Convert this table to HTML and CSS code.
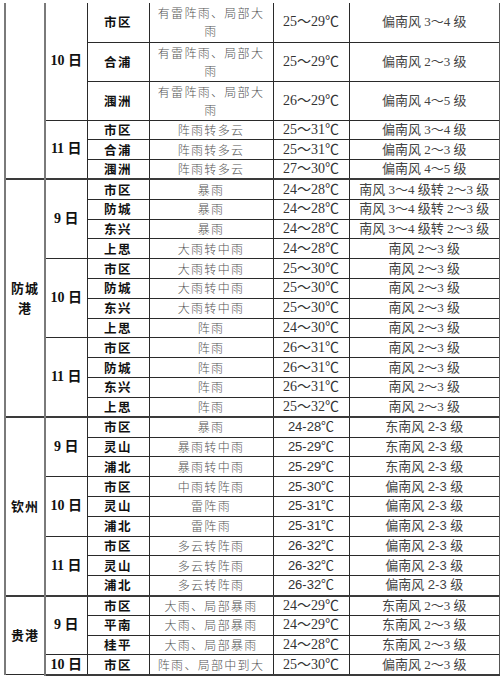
FILE: index.html
```html
<!DOCTYPE html>
<html lang="zh-CN">
<head>
<meta charset="utf-8">
<title>天气预报</title>
<link rel="stylesheet" href="styles.css">
</head>
<body>
<table class="wx">
<colgroup>
<col class="c-area"><col class="c-day"><col class="c-city"><col class="c-wx"><col class="c-temp"><col class="c-wind">
</colgroup>
<tbody>
<tr class="dbl first">
<td class="area" rowspan="6"></td>
<td class="day" rowspan="3">10 日</td>
<td class="city">市区</td><td class="wx2">有雷阵雨、局部大雨</td><td class="temp">25～29℃</td><td class="wind">偏南风 3～4 级</td>
</tr>
<tr class="dbl"><td class="city">合浦</td><td class="wx2">有雷阵雨、局部大雨</td><td class="temp">25～29℃</td><td class="wind">偏南风 2～3 级</td></tr>
<tr class="dbl"><td class="city">涠洲</td><td class="wx2">有雷阵雨、局部大雨</td><td class="temp">26～29℃</td><td class="wind">偏南风 4～5 级</td></tr>
<tr><td class="day" rowspan="3">11 日</td><td class="city">市区</td><td class="wx2">阵雨转多云</td><td class="temp">25～31℃</td><td class="wind">偏南风 3～4 级</td></tr>
<tr><td class="city">合浦</td><td class="wx2">阵雨转多云</td><td class="temp">25～31℃</td><td class="wind">偏南风 2～3 级</td></tr>
<tr><td class="city">涠洲</td><td class="wx2">阵雨转多云</td><td class="temp">27～30℃</td><td class="wind">偏南风 4～5 级</td></tr>

<tr class="sep"><td class="area" rowspan="12">防城<br>港</td><td class="day" rowspan="4">9 日</td><td class="city">市区</td><td class="wx2">暴雨</td><td class="temp">24～28℃</td><td class="wind">南风 3～4 级转 2～3 级</td></tr>
<tr><td class="city">防城</td><td class="wx2">暴雨</td><td class="temp">24～28℃</td><td class="wind">南风 3～4 级转 2～3 级</td></tr>
<tr><td class="city">东兴</td><td class="wx2">暴雨</td><td class="temp">24～28℃</td><td class="wind">南风 3～4 级转 2～3 级</td></tr>
<tr><td class="city">上思</td><td class="wx2">大雨转中雨</td><td class="temp">24～28℃</td><td class="wind">南风 2～3 级</td></tr>
<tr><td class="day" rowspan="4">10 日</td><td class="city">市区</td><td class="wx2">大雨转中雨</td><td class="temp">25～30℃</td><td class="wind">南风 2～3 级</td></tr>
<tr><td class="city">防城</td><td class="wx2">大雨转中雨</td><td class="temp">25～30℃</td><td class="wind">南风 2～3 级</td></tr>
<tr><td class="city">东兴</td><td class="wx2">大雨转中雨</td><td class="temp">25～30℃</td><td class="wind">南风 2～3 级</td></tr>
<tr><td class="city">上思</td><td class="wx2">阵雨</td><td class="temp">24～30℃</td><td class="wind">南风 2～3 级</td></tr>
<tr><td class="day" rowspan="4">11 日</td><td class="city">市区</td><td class="wx2">阵雨</td><td class="temp">26～31℃</td><td class="wind">南风 2～3 级</td></tr>
<tr><td class="city">防城</td><td class="wx2">阵雨</td><td class="temp">26～31℃</td><td class="wind">南风 2～3 级</td></tr>
<tr><td class="city">东兴</td><td class="wx2">阵雨</td><td class="temp">26～31℃</td><td class="wind">南风 2～3 级</td></tr>
<tr><td class="city">上思</td><td class="wx2">阵雨</td><td class="temp">25～32℃</td><td class="wind">南风 2～3 级</td></tr>

<tr class="sep"><td class="area" rowspan="9">钦州</td><td class="day" rowspan="3">9 日</td><td class="city">市区</td><td class="wx2">暴雨</td><td class="temp sans">24-28℃</td><td class="wind sans">东南风 2-3 级</td></tr>
<tr><td class="city">灵山</td><td class="wx2">暴雨转中雨</td><td class="temp sans">25-29℃</td><td class="wind sans">东南风 2-3 级</td></tr>
<tr><td class="city">浦北</td><td class="wx2">暴雨转中雨</td><td class="temp sans">25-29℃</td><td class="wind sans">东南风 2-3 级</td></tr>
<tr><td class="day" rowspan="3">10 日</td><td class="city">市区</td><td class="wx2">中雨转阵雨</td><td class="temp sans">25-30℃</td><td class="wind sans">偏南风 2-3 级</td></tr>
<tr><td class="city">灵山</td><td class="wx2">雷阵雨</td><td class="temp sans">25-31℃</td><td class="wind sans">偏南风 2-3 级</td></tr>
<tr><td class="city">浦北</td><td class="wx2">雷阵雨</td><td class="temp sans">25-31℃</td><td class="wind sans">偏南风 2-3 级</td></tr>
<tr><td class="day" rowspan="3">11 日</td><td class="city">市区</td><td class="wx2">多云转阵雨</td><td class="temp sans">26-32℃</td><td class="wind sans">偏南风 2-3 级</td></tr>
<tr><td class="city">灵山</td><td class="wx2">多云转阵雨</td><td class="temp sans">26-32℃</td><td class="wind sans">偏南风 2-3 级</td></tr>
<tr><td class="city">浦北</td><td class="wx2">多云转阵雨</td><td class="temp sans">26-32℃</td><td class="wind sans">偏南风 2-3 级</td></tr>

<tr class="sep"><td class="area" rowspan="4">贵港</td><td class="day" rowspan="3">9 日</td><td class="city">市区</td><td class="wx2">大雨、局部暴雨</td><td class="temp">24～29℃</td><td class="wind">东南风 2～3 级</td></tr>
<tr><td class="city">平南</td><td class="wx2">大雨、局部暴雨</td><td class="temp">24～29℃</td><td class="wind">东南风 2～3 级</td></tr>
<tr><td class="city">桂平</td><td class="wx2">大雨、局部暴雨</td><td class="temp">24～28℃</td><td class="wind">东南风 2～3 级</td></tr>
<tr class="last"><td class="day">10 日</td><td class="city">市区</td><td class="wx2 clip">阵雨、局部中到大</td><td class="temp">25～30℃</td><td class="wind">偏南风 2～3 级</td></tr>
</tbody>
</table>
</body>
</html>
```

FILE: styles.css
```css
html, body {
  margin: 0;
  padding: 0;
  background: #fff;
}
body {
  width: 500px;
  height: 677px;
  overflow: hidden;
}
.wx {
  margin: 3px 0 0 4px;
  border-collapse: collapse;
  table-layout: fixed;
  width: 495px;
  font-family: "Liberation Serif", "Noto Sans CJK SC", serif;
  color: #222;
}
.c-area { width: 40px; }
.c-day { width: 42px; }
.c-city { width: 62px; }
.c-wx { width: 124px; }
.c-temp { width: 76px; }
.c-wind { width: 151px; }

.wx td {
  border: 1px solid #2a2a2a;
  padding: 0;
  text-align: center;
  vertical-align: middle;
  line-height: 14px;
  overflow: hidden;
}
.wx tr { height: 19.82px; }
.wx tr.dbl { height: 39px; }
.wx tr.first td { border-top: none; }

.wx td.area {
  border-left: 2px solid #7a7a7a;
  border-right: 2px solid #7a7a7a;
  font-family: "Noto Sans CJK SC", sans-serif;
  font-weight: 700;
  font-size: 13px;
  letter-spacing: 1px;
  line-height: 20px;
  color: #111;
}
.wx td.day {
  font-weight: 700;
  font-size: 14px;
  color: #111;
}
.wx td.city {
  font-family: "Noto Sans CJK SC", sans-serif;
  font-weight: 700;
  font-size: 12.5px;
  letter-spacing: 1.5px;
  color: #111;
}
.wx td.wx2 {
  font-family: "Noto Sans CJK SC", sans-serif;
  font-weight: 300;
  font-size: 12px;
  letter-spacing: 1.3px;
  line-height: 18px;
  color: #555;
  padding: 0 6px;
}
.wx td.clip { white-space: nowrap; padding: 0 2px; }
.wx td.temp {
  font-size: 14px;
  color: #333;
  letter-spacing: 0;
}
.wx td.wind {
  font-size: 13px;
  color: #444;
  border-right: 2px solid #555;
}
.wx td.sans {
  font-family: "Liberation Sans", "Noto Sans CJK SC", sans-serif;
  font-size: 13px;
}
.wx tr.sep td { border-top: 2px solid #3a3a3a; }
.wx tr.last td { border-bottom: 2px solid #3a3a3a; }
.wx tr.sep td.area, .wx tr.sep td.day { border-top: 2px solid #3a3a3a; }
```
